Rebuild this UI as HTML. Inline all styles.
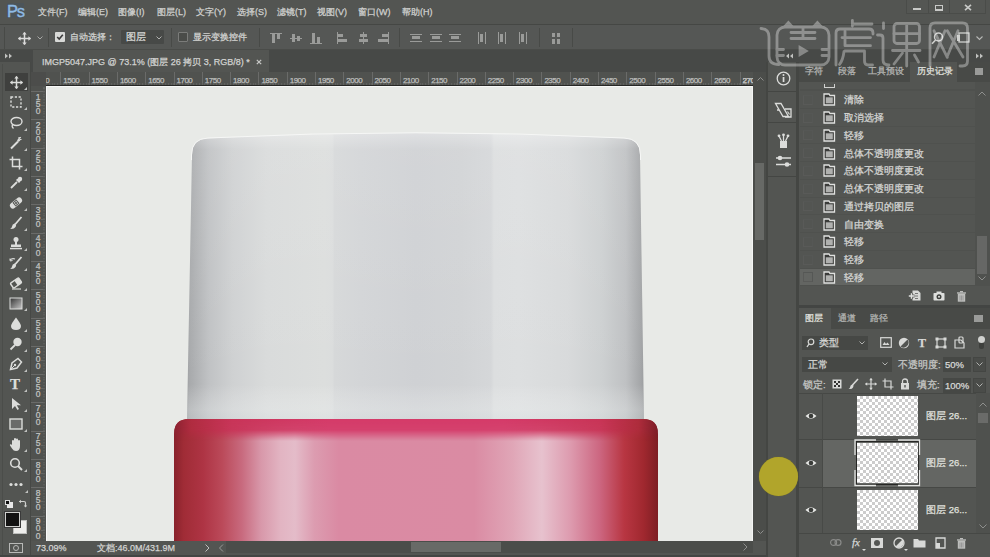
<!DOCTYPE html>
<html><head><meta charset="utf-8">
<style>
*{margin:0;padding:0;box-sizing:border-box}
html,body{width:990px;height:557px;overflow:hidden;background:#535552;font-family:"Liberation Sans",sans-serif;color:#d2d3d1}
.a{position:absolute}
.t{position:absolute;white-space:nowrap;line-height:1;-webkit-text-stroke:0.25px currentColor}
.m{font-size:9px;top:8px;color:#d0d1cf}
.rh{font-size:8px;color:#bdbebc;top:76.5px;letter-spacing:-0.5px}
.rv{font-size:8.5px;color:#c2c3c1;left:34.5px;width:7px;text-align:center;line-height:7.2px;white-space:normal}
svg{position:absolute;overflow:visible}
.hr{font-size:9.5px;color:#d6d7d5;left:844px}
</style></head><body>

<div class="a" style="left:0;top:0;width:990px;height:24px;background:#535552"></div>
<div class="a" style="left:0;top:24px;width:990px;height:1px;background:#454744"></div>
<div class="a" style="left:0;top:25px;width:990px;height:25px;background:#555755"></div>
<div class="a" style="left:0;top:49px;width:990px;height:1px;background:#4a4c49"></div>
<div class="a" style="left:0;top:50px;width:990px;height:22px;background:#474947"></div>
<div class="a" style="left:33px;top:50px;width:236px;height:22px;background:#535552"></div>
<div class="t" style="left:42px;top:58px;font-size:9px;color:#d2d3d1">IMGP5047.JPG @ 73.1% (图层 26 拷贝 3, RGB/8) *</div>
<svg style="left:256px;top:59px" width="6" height="6"><path d="M0.8 0.8L5.2 5.2M5.2 0.8L0.8 5.2" stroke="#c8c9c7" stroke-width="1.2"/></svg>
<div class="a" style="left:7px;top:3px;width:17px;height:15px;background:#4c5459"></div>
<div class="t" style="left:7px;top:3px;font-size:16.5px;color:#8ebae4;letter-spacing:-1.3px;-webkit-text-stroke:0.4px #8ebae4">Ps</div>
<div class="t m" style="left:38px">文件(F)</div>
<div class="t m" style="left:78px">编辑(E)</div>
<div class="t m" style="left:118px">图像(I)</div>
<div class="t m" style="left:157px">图层(L)</div>
<div class="t m" style="left:196px">文字(Y)</div>
<div class="t m" style="left:237px">选择(S)</div>
<div class="t m" style="left:277px">滤镜(T)</div>
<div class="t m" style="left:317px">视图(V)</div>
<div class="t m" style="left:358px">窗口(W)</div>
<div class="t m" style="left:402px">帮助(H)</div>
<div class="a" style="left:906px;top:0;width:80px;height:14px;border:1px solid #4a4c49;border-top:none;background:#545653"></div>
<div class="a" style="left:928px;top:0;width:1px;height:14px;background:#4a4c49"></div>
<div class="a" style="left:949px;top:0;width:1px;height:14px;background:#4a4c49"></div>
<div class="a" style="left:913px;top:8px;width:8px;height:2px;background:#c8c9c7"></div>
<div class="a" style="left:935px;top:5px;width:8px;height:6px;border:1.5px solid #c8c9c7;border-bottom-width:2px"></div>
<svg style="left:964px;top:4px" width="8" height="7"><path d="M1 0.8L7 6.2M7 0.8L1 6.2" stroke="#c8c9c7" stroke-width="1.6"/></svg>
<div class="a" style="left:4px;top:27px;width:1px;height:22px;background:#484a47"></div>
<svg style="left:18px;top:32px" width="13" height="13" viewBox="0 0 13 13"><path d="M6.5 0.5V12.5M0.5 6.5H12.5" stroke="#dcdcdc" stroke-width="1.5"/><path d="M6.5 0L4.3 2.6H8.7Z M6.5 13L4.3 10.4H8.7Z M0 6.5L2.6 4.3V8.7Z M13 6.5L10.4 4.3V8.7Z" fill="#dcdcdc"/></svg>
<svg style="left:37px;top:36px" width="6" height="4"><path d="M0.5 0.5L3 3L5.5 0.5" stroke="#a8a9a7" fill="none" stroke-width="1"/></svg>
<div class="a" style="left:48px;top:28px;width:1px;height:19px;background:#484a47"></div>
<div class="a" style="left:55px;top:32px;width:10px;height:10px;background:#d8d9d7;border-radius:1px"></div>
<svg style="left:56px;top:33px" width="8" height="8"><path d="M1.2 4L3.2 6L6.8 1.8" stroke="#3a3a3a" fill="none" stroke-width="1.6"/></svg>
<div class="t" style="left:70px;top:33px;font-size:9px;color:#d4d5d3">自动选择：</div>
<div class="a" style="left:121px;top:30px;width:43px;height:14px;background:#474947;border-radius:1px"></div>
<div class="t" style="left:126px;top:32px;font-size:9.5px;color:#d8d9d7">图层</div>
<svg style="left:156px;top:36px" width="6" height="4"><path d="M0.5 0.5L3 3L5.5 0.5" stroke="#b0b1af" fill="none" stroke-width="1"/></svg>
<div class="a" style="left:171px;top:28px;width:1px;height:19px;background:#484a47"></div>
<div class="a" style="left:178px;top:32px;width:10px;height:10px;border:1px solid #7b7c7a;background:#4a4c49;border-radius:1px"></div>
<div class="t" style="left:193px;top:33px;font-size:9px;color:#d4d5d3">显示变换控件</div>
<div class="a" style="left:259px;top:28px;width:1px;height:19px;background:#484a47"></div>
<div class="a" style="left:399px;top:28px;width:1px;height:19px;background:#484a47"></div>
<div class="a" style="left:539px;top:28px;width:1px;height:19px;background:#484a47"></div>
<div class="a" style="left:572px;top:28px;width:1px;height:19px;background:#484a47"></div>
<div class="a" style="left:270px;top:33px;width:12px;height:1px;background:#9a9b99"></div><div class="a" style="left:272px;top:33px;width:3px;height:10px;background:#9a9b99"></div><div class="a" style="left:277px;top:33px;width:3px;height:6px;background:#9a9b99"></div>
<div class="a" style="left:290px;top:38px;width:12px;height:1px;background:#9a9b99"></div><div class="a" style="left:292px;top:34px;width:3px;height:8px;background:#9a9b99"></div><div class="a" style="left:297px;top:36px;width:3px;height:5px;background:#9a9b99"></div>
<div class="a" style="left:310px;top:43px;width:12px;height:1px;background:#9a9b99"></div><div class="a" style="left:312px;top:33px;width:3px;height:10px;background:#9a9b99"></div><div class="a" style="left:317px;top:37px;width:3px;height:6px;background:#9a9b99"></div>
<div class="a" style="left:337px;top:32px;width:1px;height:12px;background:#9a9b99"></div><div class="a" style="left:337px;top:34px;width:6px;height:3px;background:#9a9b99"></div><div class="a" style="left:337px;top:39px;width:10px;height:3px;background:#9a9b99"></div>
<div class="a" style="left:363px;top:32px;width:1px;height:12px;background:#9a9b99"></div><div class="a" style="left:360px;top:34px;width:7px;height:3px;background:#9a9b99"></div><div class="a" style="left:359px;top:39px;width:9px;height:3px;background:#9a9b99"></div>
<div class="a" style="left:388px;top:32px;width:1px;height:12px;background:#9a9b99"></div><div class="a" style="left:382px;top:34px;width:6px;height:3px;background:#9a9b99"></div><div class="a" style="left:378px;top:39px;width:10px;height:3px;background:#9a9b99"></div>
<div class="a" style="left:410px;top:34px;width:12px;height:1px;background:#9a9b99"></div><div class="a" style="left:410px;top:41px;width:12px;height:1px;background:#9a9b99"></div><div class="a" style="left:412px;top:36px;width:8px;height:3px;background:#9a9b99"></div>
<div class="a" style="left:430px;top:34px;width:12px;height:1px;background:#9a9b99"></div><div class="a" style="left:430px;top:41px;width:12px;height:1px;background:#9a9b99"></div><div class="a" style="left:432px;top:36px;width:8px;height:3px;background:#9a9b99"></div>
<div class="a" style="left:449px;top:34px;width:12px;height:1px;background:#9a9b99"></div><div class="a" style="left:449px;top:41px;width:12px;height:1px;background:#9a9b99"></div><div class="a" style="left:451px;top:36px;width:8px;height:3px;background:#9a9b99"></div>
<div class="a" style="left:478px;top:32px;width:1px;height:12px;background:#9a9b99"></div><div class="a" style="left:485px;top:32px;width:1px;height:12px;background:#9a9b99"></div><div class="a" style="left:480px;top:34px;width:3px;height:8px;background:#9a9b99"></div>
<div class="a" style="left:498px;top:32px;width:1px;height:12px;background:#9a9b99"></div><div class="a" style="left:505px;top:32px;width:1px;height:12px;background:#9a9b99"></div><div class="a" style="left:500px;top:34px;width:3px;height:8px;background:#9a9b99"></div>
<div class="a" style="left:519px;top:32px;width:1px;height:12px;background:#9a9b99"></div><div class="a" style="left:526px;top:32px;width:1px;height:12px;background:#9a9b99"></div><div class="a" style="left:521px;top:34px;width:3px;height:8px;background:#9a9b99"></div>
<div class="a" style="left:552px;top:33px;width:3px;height:4px;background:#9a9b99"></div><div class="a" style="left:557px;top:33px;width:3px;height:4px;background:#9a9b99"></div><div class="a" style="left:552px;top:39px;width:3px;height:5px;background:#9a9b99"></div><div class="a" style="left:557px;top:39px;width:3px;height:5px;background:#9a9b99"></div>
<div class="a" style="left:0;top:50px;width:31px;height:12px;background:#474947"></div>
<svg style="left:5px;top:53px" width="8" height="6"><path d="M0 0.5L3 3L0 5.5Z M4 0.5L7 3L4 5.5Z" fill="#c0c1bf"/></svg>
<div class="a" style="left:0;top:62px;width:31px;height:495px;background:#535552"></div>
<div class="a" style="left:2px;top:64px;width:1px;height:493px;background:#4b4d4a"></div>
<div class="a" style="left:30px;top:62px;width:1px;height:495px;background:#464845"></div>
<div class="a" style="left:5px;top:73px;width:23px;height:18px;background:#3f403e"></div>
<svg style="left:10px;top:76px" width="13" height="13" viewBox="0 0 13 13"><path d="M6.5 0.5V12.5M0.5 6.5H12.5" stroke="#dcdddb" stroke-width="1.5"/><path d="M6.5 0L4.3 2.6H8.7Z M6.5 13L4.3 10.4H8.7Z M0 6.5L2.6 4.3V8.7Z M13 6.5L10.4 4.3V8.7Z" fill="#dcdddb"/></svg>
<div class="a" style="left:24px;top:87px;width:0;height:0;border-left:3px solid transparent;border-bottom:3px solid #c0c1bf"></div>
<svg style="left:10px;top:96px" width="12" height="12"><rect x="1" y="1" width="10" height="10" fill="none" stroke="#dcdddb" stroke-width="1.4" stroke-dasharray="2.2 1.6"/></svg>
<div class="a" style="left:24px;top:107px;width:0;height:0;border-left:3px solid transparent;border-bottom:3px solid #c0c1bf"></div>
<svg style="left:9px;top:116px" width="14" height="14"><ellipse cx="7.5" cy="5.5" rx="5.5" ry="4" fill="none" stroke="#dcdddb" stroke-width="1.4"/><path d="M3.5 8.5Q2.5 11 4.5 12.5" fill="none" stroke="#dcdddb" stroke-width="1.3"/></svg>
<div class="a" style="left:24px;top:128px;width:0;height:0;border-left:3px solid transparent;border-bottom:3px solid #c0c1bf"></div>
<svg style="left:9px;top:136px" width="14" height="14"><path d="M2 12.5L9 5.5" stroke="#dcdddb" stroke-width="2"/><path d="M10 1V3M12.5 3.5H10.5M11.8 1.2L10.6 2.4" stroke="#dcdddb" stroke-width="1.1"/><rect x="8.5" y="3" width="2.5" height="2.5" fill="#dcdddb" transform="rotate(45 9.7 4.2)"/></svg>
<div class="a" style="left:24px;top:148px;width:0;height:0;border-left:3px solid transparent;border-bottom:3px solid #c0c1bf"></div>
<svg style="left:9px;top:156px" width="14" height="14"><path d="M3.5 0.5V10.5H13.5M0.5 3.5H10.5V13.5" fill="none" stroke="#dcdddb" stroke-width="1.5"/></svg>
<div class="a" style="left:24px;top:168px;width:0;height:0;border-left:3px solid transparent;border-bottom:3px solid #c0c1bf"></div>
<svg style="left:9px;top:176px" width="14" height="14"><path d="M2 12L8 6" stroke="#dcdddb" stroke-width="1.8"/><path d="M7 4L10 7L11.5 5.5L8.5 2.5Z" fill="#dcdddb"/><circle cx="11" cy="3" r="2.2" fill="#dcdddb"/></svg>
<div class="a" style="left:24px;top:188px;width:0;height:0;border-left:3px solid transparent;border-bottom:3px solid #c0c1bf"></div>
<svg style="left:8px;top:196px" width="16" height="14"><g transform="rotate(-40 8 7)"><rect x="1" y="4" width="14" height="6" rx="3" fill="#dcdddb"/><rect x="5.5" y="4.5" width="5" height="5" fill="#535552"/><circle cx="7" cy="6" r="0.7" fill="#dcdddb"/><circle cx="9" cy="8" r="0.7" fill="#dcdddb"/><circle cx="9" cy="6" r="0.7" fill="#dcdddb"/><circle cx="7" cy="8" r="0.7" fill="#dcdddb"/></g></svg>
<div class="a" style="left:24px;top:208px;width:0;height:0;border-left:3px solid transparent;border-bottom:3px solid #c0c1bf"></div>
<svg style="left:9px;top:216px" width="14" height="14"><path d="M12.5 1L6 8.5" stroke="#dcdddb" stroke-width="1.8"/><path d="M5.8 7.5Q3.2 8 3 10.5Q2.5 12.5 1 13Q5 13.5 6.5 11Q7.5 9.5 6.8 8.5Z" fill="#dcdddb"/></svg>
<div class="a" style="left:24px;top:228px;width:0;height:0;border-left:3px solid transparent;border-bottom:3px solid #c0c1bf"></div>
<svg style="left:9px;top:236px" width="14" height="14"><circle cx="7" cy="3.5" r="2.5" fill="#dcdddb"/><rect x="6" y="5" width="2" height="4" fill="#dcdddb"/><rect x="2" y="8.5" width="10" height="2.5" fill="#dcdddb"/><rect x="1" y="11.8" width="12" height="1.5" fill="#dcdddb"/></svg>
<div class="a" style="left:24px;top:248px;width:0;height:0;border-left:3px solid transparent;border-bottom:3px solid #c0c1bf"></div>
<svg style="left:9px;top:256px" width="14" height="14"><path d="M12.5 1L6 8.5" stroke="#dcdddb" stroke-width="1.8"/><path d="M5.8 7.5Q3.2 8 3 10.5Q2.5 12.5 1 13Q5 13.5 6.5 11Q7.5 9.5 6.8 8.5Z" fill="#dcdddb"/><path d="M1 4Q3 2 6 3" fill="none" stroke="#dcdddb" stroke-width="1.2"/><path d="M1 2.5L1.2 5L3.5 4.5" fill="none" stroke="#dcdddb" stroke-width="1"/></svg>
<div class="a" style="left:24px;top:268px;width:0;height:0;border-left:3px solid transparent;border-bottom:3px solid #c0c1bf"></div>
<svg style="left:9px;top:276px" width="14" height="14"><g transform="rotate(-35 7 7)"><rect x="2" y="4" width="10" height="6" rx="1" fill="none" stroke="#dcdddb" stroke-width="1.4"/><rect x="7" y="4" width="5" height="6" fill="#dcdddb"/></g><path d="M3 13H12" stroke="#dcdddb" stroke-width="1.2"/></svg>
<div class="a" style="left:24px;top:288px;width:0;height:0;border-left:3px solid transparent;border-bottom:3px solid #c0c1bf"></div>
<svg style="left:9px;top:297px" width="14" height="13"><defs><linearGradient id="gt" x1="0" y1="0" x2="1" y2="1"><stop offset="0" stop-color="#333"/><stop offset="1" stop-color="#c8c8c8"/></linearGradient></defs><rect x="1" y="1" width="12" height="11" fill="url(#gt)" stroke="#dcdddb" stroke-width="1"/></svg>
<div class="a" style="left:24px;top:308px;width:0;height:0;border-left:3px solid transparent;border-bottom:3px solid #c0c1bf"></div>
<svg style="left:10px;top:317px" width="12" height="14"><path d="M6 0.5Q1 7 1 9Q1 13 6 13Q11 13 11 9Q11 7 6 0.5Z" fill="#dcdddb"/></svg>
<div class="a" style="left:24px;top:329px;width:0;height:0;border-left:3px solid transparent;border-bottom:3px solid #c0c1bf"></div>
<svg style="left:9px;top:337px" width="14" height="14"><circle cx="8.5" cy="5" r="4.2" fill="#dcdddb"/><path d="M6 8L1.5 12.5" stroke="#dcdddb" stroke-width="1.8"/></svg>
<div class="a" style="left:24px;top:349px;width:0;height:0;border-left:3px solid transparent;border-bottom:3px solid #c0c1bf"></div>
<svg style="left:9px;top:357px" width="14" height="14"><path d="M1.5 12.5L3 6L9 1.5L12.5 5L8 11Z" fill="none" stroke="#dcdddb" stroke-width="1.5"/><path d="M1.5 12.5L5.5 8.5" stroke="#dcdddb" stroke-width="1"/><circle cx="6" cy="8" r="1.2" fill="#dcdddb"/></svg>
<div class="a" style="left:24px;top:369px;width:0;height:0;border-left:3px solid transparent;border-bottom:3px solid #c0c1bf"></div>
<div class="t" style="left:10px;top:377px;font-family:'Liberation Serif',serif;font-size:15px;font-weight:bold;color:#dcdddb">T</div>
<div class="a" style="left:24px;top:389px;width:0;height:0;border-left:3px solid transparent;border-bottom:3px solid #c0c1bf"></div>
<svg style="left:11px;top:397px" width="11" height="14"><path d="M1 1V12L4 9L6.5 13L8 12L5.8 8.2H10Z" fill="#dcdddb"/></svg>
<div class="a" style="left:24px;top:409px;width:0;height:0;border-left:3px solid transparent;border-bottom:3px solid #c0c1bf"></div>
<svg style="left:9px;top:418px" width="14" height="12"><rect x="1" y="1" width="12" height="10" fill="#6a6b69" stroke="#dcdddb" stroke-width="1.4"/></svg>
<div class="a" style="left:24px;top:429px;width:0;height:0;border-left:3px solid transparent;border-bottom:3px solid #c0c1bf"></div>
<svg style="left:9px;top:437px" width="14" height="15"><path d="M3 8V4Q3 3 4 3Q5 3 5 4V7V2Q5 1 6 1Q7 1 7 2V7V2.5Q7 1.5 8 1.5Q9 1.5 9 2.5V7.5V4Q9 3 10 3Q11 3 11 4V9Q11 14 7 14Q4.5 14 3 11.5L1 8.5Q0.6 7.6 1.4 7.2Q2.2 6.9 2.8 7.8Z" fill="#dcdddb"/></svg>
<div class="a" style="left:24px;top:449px;width:0;height:0;border-left:3px solid transparent;border-bottom:3px solid #c0c1bf"></div>
<svg style="left:9px;top:457px" width="14" height="14"><circle cx="6" cy="6" r="4.3" fill="none" stroke="#dcdddb" stroke-width="1.6"/><path d="M9 9L13 13" stroke="#dcdddb" stroke-width="2"/></svg>
<div class="a" style="left:24px;top:469px;width:0;height:0;border-left:3px solid transparent;border-bottom:3px solid #c0c1bf"></div>
<svg style="left:9px;top:482px" width="14" height="5"><circle cx="2" cy="2.5" r="1.6" fill="#dcdddb"/><circle cx="7" cy="2.5" r="1.6" fill="#dcdddb"/><circle cx="12" cy="2.5" r="1.6" fill="#dcdddb"/></svg>
<div class="a" style="left:25px;top:490px;width:0;height:0;border-left:3px solid transparent;border-bottom:3px solid #c0c1bf"></div>
<div class="a" style="left:7px;top:502px;width:6px;height:6px;background:#e8e8e8"></div><div class="a" style="left:5px;top:500px;width:5px;height:5px;background:#111;border:1px solid #ddd"></div>
<svg style="left:18px;top:499px" width="9" height="9"><path d="M1 2.5H6Q7.5 2.5 7.5 4V8" fill="none" stroke="#d0d1cf" stroke-width="1.2"/><path d="M1 2.5L3 0.8V4.2Z M7.5 8.5L5.8 6.5H9.2Z" fill="#d0d1cf"/></svg>
<div class="a" style="left:13px;top:520px;width:14px;height:14px;background:#eeeeec;border:1px solid #bdbebc"></div>
<div class="a" style="left:5px;top:512px;width:15px;height:15px;background:#121212;border:1px solid #cfd0ce;outline:1px solid #3a3a3a"></div>
<div class="a" style="left:9px;top:543px;width:14px;height:10px;border:1px solid #b8b9b7"></div><div class="a" style="left:13px;top:545px;width:6px;height:6px;border:1px solid #b8b9b7;border-radius:50%"></div>
<div class="a" style="left:31px;top:72px;width:722px;height:14px;background:#50524f"></div>
<div class="a" style="left:31px;top:86px;width:15px;height:455px;background:#50524f"></div>
<div class="a" style="left:46px;top:85px;width:707px;height:1px;background:#262725"></div>
<div class="a" style="left:31px;top:72px;width:15px;height:14px;background:#4c4d4b"></div>
<div class="a" style="left:60.3px;top:72px;width:1px;height:13px;background:#6a6b69"></div>
<div class="a" style="left:74.5px;top:81px;width:1px;height:4px;background:#646663"></div>
<div class="a" style="left:88.6px;top:72px;width:1px;height:13px;background:#6a6b69"></div>
<div class="a" style="left:102.8px;top:81px;width:1px;height:4px;background:#646663"></div>
<div class="a" style="left:116.9px;top:72px;width:1px;height:13px;background:#6a6b69"></div>
<div class="a" style="left:131.1px;top:81px;width:1px;height:4px;background:#646663"></div>
<div class="a" style="left:145.2px;top:72px;width:1px;height:13px;background:#6a6b69"></div>
<div class="a" style="left:159.3px;top:81px;width:1px;height:4px;background:#646663"></div>
<div class="a" style="left:173.5px;top:72px;width:1px;height:13px;background:#6a6b69"></div>
<div class="a" style="left:187.7px;top:81px;width:1px;height:4px;background:#646663"></div>
<div class="a" style="left:201.8px;top:72px;width:1px;height:13px;background:#6a6b69"></div>
<div class="a" style="left:216.0px;top:81px;width:1px;height:4px;background:#646663"></div>
<div class="a" style="left:230.1px;top:72px;width:1px;height:13px;background:#6a6b69"></div>
<div class="a" style="left:244.3px;top:81px;width:1px;height:4px;background:#646663"></div>
<div class="a" style="left:258.4px;top:72px;width:1px;height:13px;background:#6a6b69"></div>
<div class="a" style="left:272.5px;top:81px;width:1px;height:4px;background:#646663"></div>
<div class="a" style="left:286.7px;top:72px;width:1px;height:13px;background:#6a6b69"></div>
<div class="a" style="left:300.8px;top:81px;width:1px;height:4px;background:#646663"></div>
<div class="a" style="left:315.0px;top:72px;width:1px;height:13px;background:#6a6b69"></div>
<div class="a" style="left:329.1px;top:81px;width:1px;height:4px;background:#646663"></div>
<div class="a" style="left:343.3px;top:72px;width:1px;height:13px;background:#6a6b69"></div>
<div class="a" style="left:357.4px;top:81px;width:1px;height:4px;background:#646663"></div>
<div class="a" style="left:371.6px;top:72px;width:1px;height:13px;background:#6a6b69"></div>
<div class="a" style="left:385.8px;top:81px;width:1px;height:4px;background:#646663"></div>
<div class="a" style="left:399.9px;top:72px;width:1px;height:13px;background:#6a6b69"></div>
<div class="a" style="left:414.1px;top:81px;width:1px;height:4px;background:#646663"></div>
<div class="a" style="left:428.2px;top:72px;width:1px;height:13px;background:#6a6b69"></div>
<div class="a" style="left:442.4px;top:81px;width:1px;height:4px;background:#646663"></div>
<div class="a" style="left:456.5px;top:72px;width:1px;height:13px;background:#6a6b69"></div>
<div class="a" style="left:470.6px;top:81px;width:1px;height:4px;background:#646663"></div>
<div class="a" style="left:484.8px;top:72px;width:1px;height:13px;background:#6a6b69"></div>
<div class="a" style="left:498.9px;top:81px;width:1px;height:4px;background:#646663"></div>
<div class="a" style="left:513.1px;top:72px;width:1px;height:13px;background:#6a6b69"></div>
<div class="a" style="left:527.2px;top:81px;width:1px;height:4px;background:#646663"></div>
<div class="a" style="left:541.4px;top:72px;width:1px;height:13px;background:#6a6b69"></div>
<div class="a" style="left:555.5px;top:81px;width:1px;height:4px;background:#646663"></div>
<div class="a" style="left:569.7px;top:72px;width:1px;height:13px;background:#6a6b69"></div>
<div class="a" style="left:583.9px;top:81px;width:1px;height:4px;background:#646663"></div>
<div class="a" style="left:598.0px;top:72px;width:1px;height:13px;background:#6a6b69"></div>
<div class="a" style="left:612.1px;top:81px;width:1px;height:4px;background:#646663"></div>
<div class="a" style="left:626.3px;top:72px;width:1px;height:13px;background:#6a6b69"></div>
<div class="a" style="left:640.4px;top:81px;width:1px;height:4px;background:#646663"></div>
<div class="a" style="left:654.6px;top:72px;width:1px;height:13px;background:#6a6b69"></div>
<div class="a" style="left:668.8px;top:81px;width:1px;height:4px;background:#646663"></div>
<div class="a" style="left:682.9px;top:72px;width:1px;height:13px;background:#6a6b69"></div>
<div class="a" style="left:697.0px;top:81px;width:1px;height:4px;background:#646663"></div>
<div class="a" style="left:711.2px;top:72px;width:1px;height:13px;background:#6a6b69"></div>
<div class="a" style="left:725.3px;top:81px;width:1px;height:4px;background:#646663"></div>
<div class="a" style="left:739.5px;top:72px;width:1px;height:13px;background:#6a6b69"></div>
<div class="a" style="left:46px;top:83px;width:707px;height:2px;background:repeating-linear-gradient(90deg,#616260 0 1px,transparent 1px 2.83px);background-position:0.15px 0"></div>
<div class="a" style="left:46px;top:72px;width:6px;height:13px;overflow:hidden"><div class="t rh" style="left:-12.5px;top:4.5px">1450</div></div>
<div class="t rh" style="left:63.3px">1500</div>
<div class="t rh" style="left:91.6px">1550</div>
<div class="t rh" style="left:119.9px">1600</div>
<div class="t rh" style="left:148.2px">1650</div>
<div class="t rh" style="left:176.5px">1700</div>
<div class="t rh" style="left:204.8px">1750</div>
<div class="t rh" style="left:233.1px">1800</div>
<div class="t rh" style="left:261.4px">1850</div>
<div class="t rh" style="left:289.7px">1900</div>
<div class="t rh" style="left:318.0px">1950</div>
<div class="t rh" style="left:346.3px">2000</div>
<div class="t rh" style="left:374.6px">2050</div>
<div class="t rh" style="left:402.9px">2100</div>
<div class="t rh" style="left:431.2px">2150</div>
<div class="t rh" style="left:459.5px">2200</div>
<div class="t rh" style="left:487.8px">2250</div>
<div class="t rh" style="left:516.1px">2300</div>
<div class="t rh" style="left:544.4px">2350</div>
<div class="t rh" style="left:572.7px">2400</div>
<div class="t rh" style="left:601.0px">2450</div>
<div class="t rh" style="left:629.3px">2500</div>
<div class="t rh" style="left:657.6px">2550</div>
<div class="t rh" style="left:685.9px">2600</div>
<div class="t rh" style="left:714.2px">2650</div>
<div class="t rh" style="left:742.5px">2700</div>
<div class="t rh" style="left:742.5px;width:10.5px;overflow:hidden">2700</div>
<div class="a" style="left:31px;top:91.1px;width:14px;height:1px;background:#6a6b69"></div>
<div class="a" style="left:41px;top:105.2px;width:4px;height:1px;background:#646663"></div>
<div class="t rv" style="top:93.6px">1<br>5<br>0</div>
<div class="a" style="left:31px;top:119.4px;width:14px;height:1px;background:#6a6b69"></div>
<div class="a" style="left:41px;top:133.5px;width:4px;height:1px;background:#646663"></div>
<div class="t rv" style="top:121.9px">2<br>0<br>0</div>
<div class="a" style="left:31px;top:147.7px;width:14px;height:1px;background:#6a6b69"></div>
<div class="a" style="left:41px;top:161.8px;width:4px;height:1px;background:#646663"></div>
<div class="t rv" style="top:150.2px">2<br>5<br>0</div>
<div class="a" style="left:31px;top:176.0px;width:14px;height:1px;background:#6a6b69"></div>
<div class="a" style="left:41px;top:190.2px;width:4px;height:1px;background:#646663"></div>
<div class="t rv" style="top:178.5px">3<br>0<br>0</div>
<div class="a" style="left:31px;top:204.3px;width:14px;height:1px;background:#6a6b69"></div>
<div class="a" style="left:41px;top:218.5px;width:4px;height:1px;background:#646663"></div>
<div class="t rv" style="top:206.8px">3<br>5<br>0</div>
<div class="a" style="left:31px;top:232.6px;width:14px;height:1px;background:#6a6b69"></div>
<div class="a" style="left:41px;top:246.8px;width:4px;height:1px;background:#646663"></div>
<div class="t rv" style="top:235.1px">4<br>0<br>0</div>
<div class="a" style="left:31px;top:260.9px;width:14px;height:1px;background:#6a6b69"></div>
<div class="a" style="left:41px;top:275.0px;width:4px;height:1px;background:#646663"></div>
<div class="t rv" style="top:263.4px">4<br>5<br>0</div>
<div class="a" style="left:31px;top:289.2px;width:14px;height:1px;background:#6a6b69"></div>
<div class="a" style="left:41px;top:303.3px;width:4px;height:1px;background:#646663"></div>
<div class="t rv" style="top:291.7px">5<br>0<br>0</div>
<div class="a" style="left:31px;top:317.5px;width:14px;height:1px;background:#6a6b69"></div>
<div class="a" style="left:41px;top:331.6px;width:4px;height:1px;background:#646663"></div>
<div class="t rv" style="top:320.0px">5<br>5<br>0</div>
<div class="a" style="left:31px;top:345.8px;width:14px;height:1px;background:#6a6b69"></div>
<div class="a" style="left:41px;top:359.9px;width:4px;height:1px;background:#646663"></div>
<div class="t rv" style="top:348.3px">6<br>0<br>0</div>
<div class="a" style="left:31px;top:374.1px;width:14px;height:1px;background:#6a6b69"></div>
<div class="a" style="left:41px;top:388.2px;width:4px;height:1px;background:#646663"></div>
<div class="t rv" style="top:376.6px">6<br>5<br>0</div>
<div class="a" style="left:31px;top:402.4px;width:14px;height:1px;background:#6a6b69"></div>
<div class="a" style="left:41px;top:416.5px;width:4px;height:1px;background:#646663"></div>
<div class="t rv" style="top:404.9px">7<br>0<br>0</div>
<div class="a" style="left:31px;top:430.7px;width:14px;height:1px;background:#6a6b69"></div>
<div class="a" style="left:41px;top:444.9px;width:4px;height:1px;background:#646663"></div>
<div class="t rv" style="top:433.2px">7<br>5<br>0</div>
<div class="a" style="left:31px;top:459.0px;width:14px;height:1px;background:#6a6b69"></div>
<div class="a" style="left:41px;top:473.1px;width:4px;height:1px;background:#646663"></div>
<div class="t rv" style="top:461.5px">8<br>0<br>0</div>
<div class="a" style="left:31px;top:487.3px;width:14px;height:1px;background:#6a6b69"></div>
<div class="a" style="left:41px;top:501.4px;width:4px;height:1px;background:#646663"></div>
<div class="t rv" style="top:489.8px">8<br>5<br>0</div>
<div class="a" style="left:31px;top:515.6px;width:14px;height:1px;background:#6a6b69"></div>
<div class="a" style="left:41px;top:529.8px;width:4px;height:1px;background:#646663"></div>
<div class="t rv" style="top:518.1px">9<br>0<br>0</div>
<div class="a" style="left:43px;top:87px;width:2px;height:454px;background:repeating-linear-gradient(180deg,#616260 0 1px,transparent 1px 2.83px);background-position:0 1.27px"></div>
<div class="a" style="left:46px;top:86px;width:707px;height:455px;background:#e8eae7;overflow:hidden">
<svg style="left:0;top:0" width="707" height="455" viewBox="46 86 707 455">
<defs>
<linearGradient id="cap" x1="187" y1="0" x2="644" y2="0" gradientUnits="userSpaceOnUse">
<stop offset="0" stop-color="#9fa1a3"/>
<stop offset="0.006" stop-color="#a8aaac"/>
<stop offset="0.048" stop-color="#c0c2c4"/>
<stop offset="0.1" stop-color="#cfd1d2"/>
<stop offset="0.175" stop-color="#d9dbdb"/>
<stop offset="0.3" stop-color="#dcdedd"/>
<stop offset="0.318" stop-color="#dbdddd"/>
<stop offset="0.323" stop-color="#d6d8d9"/>
<stop offset="0.38" stop-color="#d3d5d7"/>
<stop offset="0.5" stop-color="#cfd1d4"/>
<stop offset="0.6" stop-color="#d1d3d5"/>
<stop offset="0.665" stop-color="#d5d7d9"/>
<stop offset="0.672" stop-color="#dcdedf"/>
<stop offset="0.726" stop-color="#dddfe0"/>
<stop offset="0.834" stop-color="#d8dadb"/>
<stop offset="0.908" stop-color="#cdd0d1"/>
<stop offset="0.96" stop-color="#bfc1c3"/>
<stop offset="0.993" stop-color="#a4a6a8"/>
<stop offset="1" stop-color="#9c9ea0"/>
</linearGradient>
<linearGradient id="capv" x1="0" y1="132" x2="0" y2="419" gradientUnits="userSpaceOnUse">
<stop offset="0" stop-color="#ffffff" stop-opacity="0.35"/>
<stop offset="0.06" stop-color="#ffffff" stop-opacity="0.08"/>
<stop offset="0.88" stop-color="#ffffff" stop-opacity="0"/>
<stop offset="0.97" stop-color="#eef2f2" stop-opacity="0.3"/>
<stop offset="1" stop-color="#e0e8e8" stop-opacity="0.3"/>
</linearGradient>
<linearGradient id="red" x1="174" y1="0" x2="658" y2="0" gradientUnits="userSpaceOnUse">
<stop offset="0" stop-color="#88222c"/>
<stop offset="0.02" stop-color="#a02c36"/>
<stop offset="0.06" stop-color="#ae3444"/>
<stop offset="0.1" stop-color="#bb4a5a"/>
<stop offset="0.14" stop-color="#c86a7e"/>
<stop offset="0.18" stop-color="#d898aa"/>
<stop offset="0.22" stop-color="#e2b4c2"/>
<stop offset="0.25" stop-color="#e4bcc9"/>
<stop offset="0.29" stop-color="#dc9cb0"/>
<stop offset="0.34" stop-color="#da8aa3"/>
<stop offset="0.62" stop-color="#da8ba3"/>
<stop offset="0.7" stop-color="#e0a6b7"/>
<stop offset="0.76" stop-color="#e7c2ce"/>
<stop offset="0.82" stop-color="#dd9aae"/>
<stop offset="0.88" stop-color="#cc6680"/>
<stop offset="0.93" stop-color="#b83642"/>
<stop offset="0.97" stop-color="#a0282f"/>
<stop offset="1" stop-color="#7e1e24"/>
</linearGradient>
<linearGradient id="rim" x1="174" y1="0" x2="658" y2="0" gradientUnits="userSpaceOnUse">
<stop offset="0" stop-color="#8a2230"/>
<stop offset="0.035" stop-color="#b02c40"/>
<stop offset="0.12" stop-color="#c83458"/>
<stop offset="0.32" stop-color="#d43a68"/>
<stop offset="0.68" stop-color="#d43a68"/>
<stop offset="0.88" stop-color="#c83456"/>
<stop offset="0.96" stop-color="#ae2c3c"/>
<stop offset="1" stop-color="#7c1e28"/>
</linearGradient>
<linearGradient id="rimv" x1="0" y1="419" x2="0" y2="441" gradientUnits="userSpaceOnUse">
<stop offset="0" stop-color="#fff" stop-opacity="1"/>
<stop offset="0.5" stop-color="#fff" stop-opacity="0.92"/>
<stop offset="0.85" stop-color="#fff" stop-opacity="0.25"/>
<stop offset="1" stop-color="#fff" stop-opacity="0"/>
</linearGradient>
<mask id="rimm" maskUnits="userSpaceOnUse" x="0" y="0" width="990" height="557"><rect x="0" y="0" width="990" height="557" fill="url(#rimv)"/></mask>
</defs>
<path d="M174 545V434Q174 419 189 419H643Q658 419 658 434V545Z" fill="url(#red)"/>
<path d="M174 545V434Q174 419 189 419H643Q658 419 658 434V545Z" fill="url(#rim)" mask="url(#rimm)"/>
<path d="M187 419L192 155Q192 139 208 138.5Q416 128 624 138.5Q640 139 640 155L644 419Z" fill="url(#cap)"/>
<path d="M187 419L192 155Q192 139 208 138.5Q416 128 624 138.5Q640 139 640 155L644 419Z" fill="url(#capv)"/>
<path d="M191.5 160V155Q191.5 138.5 208 138Q416 127.5 624 138Q640.5 138.5 640.5 155V160" fill="none" stroke="#f6f7f6" stroke-width="1"/>
</svg>
<div class="a" style="left:0;top:0;width:707px;height:1px;background:#f8f9f8"></div>
<div class="a" style="left:0;top:0;width:1px;height:455px;background:#f8f9f8"></div>
<div class="a" style="left:706px;top:0;width:1px;height:455px;background:#f4f5f4"></div>
</div>
<div class="a" style="left:753px;top:72px;width:14px;height:469px;background:#4b4d4a"></div>
<svg style="left:757px;top:77px" width="7" height="4"><path d="M0.5 3.5L3.5 0.5L6.5 3.5" stroke="#8e8f8d" fill="none"/></svg>
<div class="a" style="left:755px;top:163px;width:9px;height:77px;background:#676966"></div>
<svg style="left:757px;top:530px" width="7" height="4"><path d="M0.5 0.5L3.5 3.5L6.5 0.5" stroke="#8e8f8d" fill="none"/></svg>
<div class="a" style="left:31px;top:541px;width:736px;height:16px;background:#535552"></div>
<div class="a" style="left:0;top:555px;width:990px;height:2px;background:#434543"></div>
<div class="t" style="left:36px;top:544px;font-size:9px;color:#d2d3d1">73.09%</div>
<div class="t" style="left:97px;top:544px;font-size:9px;color:#d2d3d1">文档:46.0M/431.9M</div>
<svg style="left:205px;top:544px" width="5" height="8"><path d="M0.5 0.5L4 4L0.5 7.5" stroke="#c0c1bf" fill="none"/></svg>
<svg style="left:219px;top:544px" width="5" height="8"><path d="M4 0.5L0.5 4L4 7.5" stroke="#9a9b99" fill="none"/></svg>
<div class="a" style="left:226px;top:541px;width:527px;height:12px;background:#4b4d4a"></div>
<div class="a" style="left:411px;top:542px;width:90px;height:10px;background:#686a67"></div>
<svg style="left:743px;top:543px" width="5" height="8"><path d="M0.5 0.5L4 4L0.5 7.5" stroke="#8e8f8d" fill="none"/></svg>
<svg style="left:931px;top:32px" width="13" height="13"><circle cx="7.5" cy="5" r="4" fill="none" stroke="#d0d1cf" stroke-width="1.4"/><path d="M4.6 8L1 11.8" stroke="#d0d1cf" stroke-width="1.6"/></svg>
<svg style="left:956px;top:32px" width="14" height="12"><rect x="3" y="1" width="10" height="9" fill="none" stroke="#d0d1cf" stroke-width="1.3"/><rect x="1" y="3" width="3" height="6" fill="#d0d1cf"/></svg>
<svg style="left:976px;top:36px" width="7" height="5"><path d="M0.5 0.5L3.5 3.5L6.5 0.5" stroke="#b8b9b7" fill="none" stroke-width="1.1"/></svg>
<div class="a" style="left:767px;top:50px;width:223px;height:12px;background:#474947"></div>
<svg style="left:786px;top:53px" width="8" height="6"><path d="M3 0.5L0 3L3 5.5Z M7 0.5L4 3L7 5.5Z" fill="#c0c1bf"/></svg>
<svg style="left:976px;top:53px" width="8" height="6"><path d="M0 0.5L3 3L0 5.5Z M4 0.5L7 3L4 5.5Z" fill="#c0c1bf"/></svg>
<div class="a" style="left:767px;top:62px;width:30px;height:495px;background:#535552"></div>
<div class="a" style="left:766px;top:62px;width:2px;height:495px;background:#444643"></div>
<div class="a" style="left:796px;top:62px;width:3px;height:495px;background:#444643"></div>
<div class="a" style="left:768px;top:91px;width:28px;height:1px;background:#444643"></div>
<div class="a" style="left:768px;top:122px;width:28px;height:1px;background:#444643"></div>
<div class="a" style="left:768px;top:176px;width:28px;height:1px;background:#444643"></div>
<svg style="left:776px;top:71px" width="15" height="15"><circle cx="7.5" cy="7.5" r="6.3" fill="none" stroke="#dcdddb" stroke-width="1.3"/><rect x="6.7" y="6" width="1.7" height="5" fill="#dcdddb"/><circle cx="7.5" cy="4" r="1" fill="#dcdddb"/></svg>
<svg style="left:774px;top:101px" width="20" height="18"><path d="M1.5 2.5H7L14.5 15.5H9Z" fill="none" stroke="#dcdddb" stroke-width="1.3"/><path d="M11 8H17V16H11" fill="none" stroke="#dcdddb" stroke-width="1.3"/><path d="M13.5 10.5L15.5 13.5" stroke="#dcdddb" stroke-width="1.1"/><circle cx="4" cy="9" r="1" fill="#dcdddb"/></svg>
<svg style="left:777px;top:133px" width="13" height="16"><rect x="3" y="8" width="7" height="7" fill="#dcdddb"/><path d="M4.5 8L2 3M6.5 8V2M8.5 8L11 3" stroke="#dcdddb" stroke-width="1.3"/><circle cx="2" cy="2.8" r="1.4" fill="#dcdddb"/><circle cx="6.5" cy="1.8" r="1.4" fill="#dcdddb"/><circle cx="11" cy="2.8" r="1.4" fill="#dcdddb"/></svg>
<svg style="left:775px;top:155px" width="17" height="13"><path d="M1 3H16M1 9.5H16" stroke="#dcdddb" stroke-width="1.3"/><circle cx="5" cy="3" r="2.3" fill="#dcdddb"/><circle cx="12" cy="9.5" r="2.3" fill="#dcdddb"/></svg>
<div class="a" style="left:799px;top:62px;width:191px;height:495px;background:#535552"></div>
<div class="a" style="left:799px;top:62px;width:191px;height:20px;background:#484a47"></div>
<div class="a" style="left:910px;top:62px;width:47px;height:20px;background:#535552"></div>
<div class="t" style="left:805px;top:67px;font-size:9px;color:#b4b5b3">字符</div>
<div class="t" style="left:838px;top:67px;font-size:9px;color:#b4b5b3">段落</div>
<div class="t" style="left:868px;top:67px;font-size:9px;color:#b4b5b3">工具预设</div>
<div class="t" style="left:917px;top:67px;font-size:9px;color:#e0e1df">历史记录</div>
<div class="a" style="left:975px;top:68px;width:8px;height:7px;background:#9a9b99"></div>
<div class="a" style="left:800px;top:82px;width:175px;height:204px;background:#4f514e"></div>
<div class="a" style="left:800px;top:82.00px;width:175px;height:7.00px;background:#535552"></div>
<div class="a" style="left:824px;top:84px;width:11px;height:4px;border:1.3px solid #d0d1cf;border-top:none"></div>
<div class="a" style="left:800px;top:91.00px;width:175px;height:16.75px;background:#535552"></div>
<div class="a" style="left:803px;top:94.9px;width:10px;height:10px;border:1px solid #595a58;border-top-color:#555755;border-right-color:#555755"></div>
<svg style="left:823px;top:93.4px" width="13" height="13"><path d="M1 1H6L7 2.5H11.5V12H1Z" fill="#3a3b39" stroke="#e0e1df" stroke-width="1.3"/><rect x="2.8" y="4.3" width="7" height="6" fill="#b0b1af"/></svg>
<div class="t hr" style="top:95.4px">清除</div>
<div class="a" style="left:800px;top:108.75px;width:175px;height:16.75px;background:#535552"></div>
<div class="a" style="left:803px;top:112.6px;width:10px;height:10px;border:1px solid #595a58;border-top-color:#555755;border-right-color:#555755"></div>
<svg style="left:823px;top:111.1px" width="13" height="13"><path d="M1 1H6L7 2.5H11.5V12H1Z" fill="#3a3b39" stroke="#e0e1df" stroke-width="1.3"/><rect x="2.8" y="4.3" width="7" height="6" fill="#b0b1af"/></svg>
<div class="t hr" style="top:113.1px">取消选择</div>
<div class="a" style="left:800px;top:126.50px;width:175px;height:16.75px;background:#535552"></div>
<div class="a" style="left:803px;top:130.4px;width:10px;height:10px;border:1px solid #595a58;border-top-color:#555755;border-right-color:#555755"></div>
<svg style="left:823px;top:128.9px" width="13" height="13"><path d="M1 1H6L7 2.5H11.5V12H1Z" fill="#3a3b39" stroke="#e0e1df" stroke-width="1.3"/><rect x="2.8" y="4.3" width="7" height="6" fill="#b0b1af"/></svg>
<div class="t hr" style="top:130.9px">轻移</div>
<div class="a" style="left:800px;top:144.25px;width:175px;height:16.75px;background:#535552"></div>
<div class="a" style="left:803px;top:148.1px;width:10px;height:10px;border:1px solid #595a58;border-top-color:#555755;border-right-color:#555755"></div>
<svg style="left:823px;top:146.6px" width="13" height="13"><path d="M1 1H6L7 2.5H11.5V12H1Z" fill="#3a3b39" stroke="#e0e1df" stroke-width="1.3"/><rect x="2.8" y="4.3" width="7" height="6" fill="#b0b1af"/></svg>
<div class="t hr" style="top:148.6px">总体不透明度更改</div>
<div class="a" style="left:800px;top:162.00px;width:175px;height:16.75px;background:#535552"></div>
<div class="a" style="left:803px;top:165.9px;width:10px;height:10px;border:1px solid #595a58;border-top-color:#555755;border-right-color:#555755"></div>
<svg style="left:823px;top:164.4px" width="13" height="13"><path d="M1 1H6L7 2.5H11.5V12H1Z" fill="#3a3b39" stroke="#e0e1df" stroke-width="1.3"/><rect x="2.8" y="4.3" width="7" height="6" fill="#b0b1af"/></svg>
<div class="t hr" style="top:166.4px">总体不透明度更改</div>
<div class="a" style="left:800px;top:179.75px;width:175px;height:16.75px;background:#535552"></div>
<div class="a" style="left:803px;top:183.6px;width:10px;height:10px;border:1px solid #595a58;border-top-color:#555755;border-right-color:#555755"></div>
<svg style="left:823px;top:182.1px" width="13" height="13"><path d="M1 1H6L7 2.5H11.5V12H1Z" fill="#3a3b39" stroke="#e0e1df" stroke-width="1.3"/><rect x="2.8" y="4.3" width="7" height="6" fill="#b0b1af"/></svg>
<div class="t hr" style="top:184.1px">总体不透明度更改</div>
<div class="a" style="left:800px;top:197.50px;width:175px;height:16.75px;background:#535552"></div>
<div class="a" style="left:803px;top:201.4px;width:10px;height:10px;border:1px solid #595a58;border-top-color:#555755;border-right-color:#555755"></div>
<svg style="left:823px;top:199.9px" width="13" height="13"><path d="M1 1H6L7 2.5H11.5V12H1Z" fill="#3a3b39" stroke="#e0e1df" stroke-width="1.3"/><rect x="2.8" y="4.3" width="7" height="6" fill="#b0b1af"/></svg>
<div class="t hr" style="top:201.9px">通过拷贝的图层</div>
<div class="a" style="left:800px;top:215.25px;width:175px;height:16.75px;background:#535552"></div>
<div class="a" style="left:803px;top:219.1px;width:10px;height:10px;border:1px solid #595a58;border-top-color:#555755;border-right-color:#555755"></div>
<svg style="left:823px;top:217.6px" width="13" height="13"><path d="M1 1H6L7 2.5H11.5V12H1Z" fill="#3a3b39" stroke="#e0e1df" stroke-width="1.3"/><rect x="2.8" y="4.3" width="7" height="6" fill="#b0b1af"/></svg>
<div class="t hr" style="top:219.6px">自由变换</div>
<div class="a" style="left:800px;top:233.00px;width:175px;height:16.75px;background:#535552"></div>
<div class="a" style="left:803px;top:236.9px;width:10px;height:10px;border:1px solid #595a58;border-top-color:#555755;border-right-color:#555755"></div>
<svg style="left:823px;top:235.4px" width="13" height="13"><path d="M1 1H6L7 2.5H11.5V12H1Z" fill="#3a3b39" stroke="#e0e1df" stroke-width="1.3"/><rect x="2.8" y="4.3" width="7" height="6" fill="#b0b1af"/></svg>
<div class="t hr" style="top:237.4px">轻移</div>
<div class="a" style="left:800px;top:250.75px;width:175px;height:16.75px;background:#535552"></div>
<div class="a" style="left:803px;top:254.6px;width:10px;height:10px;border:1px solid #595a58;border-top-color:#555755;border-right-color:#555755"></div>
<svg style="left:823px;top:253.1px" width="13" height="13"><path d="M1 1H6L7 2.5H11.5V12H1Z" fill="#3a3b39" stroke="#e0e1df" stroke-width="1.3"/><rect x="2.8" y="4.3" width="7" height="6" fill="#b0b1af"/></svg>
<div class="t hr" style="top:255.1px">轻移</div>
<div class="a" style="left:800px;top:268.50px;width:175px;height:16.75px;background:#636562"></div>
<div class="a" style="left:803px;top:272.4px;width:10px;height:10px;border:1px solid #595a58;border-top-color:#555755;border-right-color:#555755"></div>
<svg style="left:823px;top:270.9px" width="13" height="13"><path d="M1 1H6L7 2.5H11.5V12H1Z" fill="#3a3b39" stroke="#e0e1df" stroke-width="1.3"/><rect x="2.8" y="4.3" width="7" height="6" fill="#b0b1af"/></svg>
<div class="t hr" style="top:272.9px">轻移</div>
<div class="a" style="left:975px;top:82px;width:15px;height:204px;background:#4f514e"></div>
<svg style="left:978px;top:91px" width="8" height="5"><path d="M0.5 4.5L4 1L7.5 4.5" stroke="#8e8f8d" fill="none"/></svg>
<div class="a" style="left:977px;top:236px;width:10px;height:38px;background:#666765"></div>
<svg style="left:978px;top:276px" width="8" height="5"><path d="M0.5 0.5L4 4L7.5 0.5" stroke="#8e8f8d" fill="none"/></svg>
<svg style="left:908px;top:290px" width="13" height="11"><path d="M4.5 0.5H10L12.5 3V10.5H4.5Z" fill="#d8d9d7"/><path d="M7 3.5H10M7 6H10M7 8.5H10" stroke="#6a6b69" stroke-width="0.9"/><path d="M0.5 6H6.5M3.5 3V9" stroke="#535552" stroke-width="3"/><path d="M0.8 6H6.2M3.5 3.3V8.7" stroke="#e0e1df" stroke-width="1.5"/></svg>
<svg style="left:933px;top:291px" width="12" height="10"><rect x="0.5" y="2" width="11" height="7.5" rx="0.8" fill="#dedfdd"/><rect x="3.5" y="0.5" width="5" height="2" fill="#dedfdd"/><circle cx="6" cy="5.8" r="2.5" fill="#3e403d"/><circle cx="6" cy="5.8" r="1" fill="#dedfdd"/></svg>
<svg style="left:957px;top:291px" width="9" height="11"><rect x="0.8" y="2.5" width="7.4" height="8.2" fill="#bdbebc"/><rect x="0" y="1.3" width="9" height="1.3" fill="#bdbebc"/><rect x="3" y="0" width="3" height="1.3" fill="#bdbebc"/><path d="M3 4.5V9.5M4.5 4.5V9.5M6 4.5V9.5" stroke="#8a8b89" stroke-width="0.7"/></svg>
<div class="a" style="left:799px;top:305px;width:191px;height:3px;background:#434543"></div>
<div class="a" style="left:799px;top:308px;width:191px;height:21px;background:#484a47"></div>
<div class="a" style="left:799px;top:308px;width:32px;height:21px;background:#535552"></div>
<div class="t" style="left:805px;top:314px;font-size:9px;color:#e0e1df">图层</div>
<div class="t" style="left:838px;top:314px;font-size:9px;color:#b4b5b3">通道</div>
<div class="t" style="left:870px;top:314px;font-size:9px;color:#b4b5b3">路径</div>
<div class="a" style="left:974px;top:315px;width:9px;height:7px;background:#9a9b99"></div>
<div class="a" style="left:802px;top:336px;width:66px;height:14px;background:#464845"></div>
<svg style="left:806px;top:338px" width="9" height="10"><circle cx="5" cy="3.8" r="2.8" fill="none" stroke="#d8d9d7" stroke-width="1.2"/><path d="M3 6L1 9" stroke="#d8d9d7" stroke-width="1.3"/></svg>
<div class="t" style="left:819px;top:338px;font-size:9.5px;color:#d8d9d7">类型</div>
<svg style="left:859px;top:341px" width="6" height="4"><path d="M0.5 0.5L3 3L5.5 0.5" stroke="#b0b1af" fill="none"/></svg>
<svg style="left:880px;top:337px" width="12" height="11"><rect x="0.7" y="0.7" width="10.6" height="9.6" fill="none" stroke="#d8d9d7" stroke-width="1.2"/><path d="M2.5 8L4.5 5L6 7L7.5 5.5L9.5 8Z" fill="#d8d9d7"/></svg>
<svg style="left:898px;top:337px" width="12" height="12"><circle cx="6" cy="6" r="5.2" fill="#d8d9d7"/><path d="M2.5 9.5L9.5 2.5A5 5 0 0 1 2.5 9.5Z" fill="#535552"/></svg>
<div class="t" style="left:918px;top:337px;font-family:'Liberation Serif',serif;font-weight:bold;font-size:12px;color:#d8d9d7">T</div>
<svg style="left:935px;top:337px" width="12" height="12"><rect x="2" y="2" width="8" height="8" fill="none" stroke="#d8d9d7" stroke-width="1.2"/><rect x="0.5" y="0.5" width="3" height="3" fill="#d8d9d7"/><rect x="8.5" y="0.5" width="3" height="3" fill="#d8d9d7"/><rect x="0.5" y="8.5" width="3" height="3" fill="#d8d9d7"/><rect x="8.5" y="8.5" width="3" height="3" fill="#d8d9d7"/></svg>
<svg style="left:954px;top:336px" width="11" height="13"><path d="M1 4H7L10 7V12H1Z" fill="none" stroke="#d8d9d7" stroke-width="1.2"/><rect x="5" y="1" width="4" height="6" rx="1" fill="none" stroke="#d8d9d7" stroke-width="1.2"/></svg>
<div class="a" style="left:979px;top:341px;width:5px;height:8px;border-radius:2px;background:#3e403d"></div><div class="a" style="left:978px;top:336px;width:7px;height:7px;border-radius:50%;background:#d0d1cf"></div>
<div class="a" style="left:802px;top:357px;width:90px;height:15px;background:#464845"></div>
<div class="t" style="left:808px;top:360px;font-size:9.5px;color:#d8d9d7">正常</div>
<svg style="left:882px;top:362px" width="6" height="4"><path d="M0.5 0.5L3 3L5.5 0.5" stroke="#b0b1af" fill="none"/></svg>
<div class="t" style="left:898px;top:360px;font-size:9.5px;color:#c8c9c7">不透明度:</div>
<div class="a" style="left:943px;top:357px;width:28px;height:15px;background:#464845"></div>
<div class="t" style="left:945px;top:360px;font-size:9.5px;color:#d8d9d7">50%</div>
<div class="a" style="left:973px;top:357px;width:13px;height:15px;background:#4a4c49;border:1px solid #444643"></div>
<svg style="left:976px;top:362px" width="7" height="4"><path d="M0.5 0.5L3.5 3.5L6.5 0.5" stroke="#b0b1af" fill="none"/></svg>
<div class="t" style="left:803px;top:380px;font-size:9.5px;color:#c8c9c7">锁定:</div>
<svg style="left:832px;top:379px" width="10" height="10"><rect x="0.5" y="0.5" width="9" height="9" fill="#d8d9d7"/><rect x="2" y="2" width="2" height="2" fill="#333"/><rect x="6" y="2" width="2" height="2" fill="#333"/><rect x="4" y="4" width="2" height="2" fill="#333"/><rect x="2" y="6" width="2" height="2" fill="#333"/><rect x="6" y="6" width="2" height="2" fill="#333"/></svg>
<svg style="left:848px;top:378px" width="11" height="12"><path d="M10 1L4.5 7" stroke="#d8d9d7" stroke-width="1.6"/><path d="M4.5 6.2Q2.3 6.8 2.2 8.8Q2 10.5 0.5 11Q4 11.5 5 9.5Q5.7 8.3 5.3 7Z" fill="#d8d9d7"/></svg>
<svg style="left:865px;top:378px" width="12" height="12"><path d="M6 0.5V11.5M0.5 6H11.5" stroke="#d8d9d7" stroke-width="1.2"/><path d="M6 0L4.2 2.2H7.8Z M6 12L4.2 9.8H7.8Z M0 6L2.2 4.2V7.8Z M12 6L9.8 4.2V7.8Z" fill="#d8d9d7"/></svg>
<svg style="left:882px;top:378px" width="12" height="12"><path d="M3 0.5V9H11.5M0.5 3H9V11.5" fill="none" stroke="#d8d9d7" stroke-width="1.2"/></svg>
<svg style="left:900px;top:378px" width="10" height="12"><path d="M2.5 5V3.5Q2.5 1 5 1Q7.5 1 7.5 3.5V5" fill="none" stroke="#d8d9d7" stroke-width="1.3"/><rect x="1" y="5" width="8" height="6.5" fill="#d8d9d7"/><rect x="4.3" y="7" width="1.4" height="2.5" fill="#535552"/></svg>
<div class="t" style="left:917px;top:380px;font-size:9.5px;color:#c8c9c7">填充:</div>
<div class="a" style="left:943px;top:378px;width:28px;height:15px;background:#464845"></div>
<div class="t" style="left:945px;top:381px;font-size:9.5px;color:#d8d9d7">100%</div>
<div class="a" style="left:973px;top:378px;width:13px;height:15px;background:#4a4c49;border:1px solid #444643"></div>
<svg style="left:976px;top:383px" width="7" height="4"><path d="M0.5 0.5L3.5 3.5L6.5 0.5" stroke="#b0b1af" fill="none"/></svg>
<div class="a" style="left:799px;top:393px;width:177px;height:140px;background:#535552"></div>
<div class="a" style="left:799px;top:393px;width:177px;height:1px;background:#464845"></div>
<div class="a" style="left:822px;top:393px;width:1px;height:46px;background:#484a47"></div>
<svg style="left:805px;top:412.0px" width="12" height="8"><path d="M0.5 4Q6 -1.5 11.5 4Q6 9.5 0.5 4Z" fill="#e8e9e7"/><circle cx="6" cy="4" r="2.3" fill="#3a3c39"/></svg>
<div class="a" style="left:857px;top:396.0px;width:61px;height:40px;background-color:#ffffff;background-image:linear-gradient(45deg,#cccccc 25%,transparent 25%,transparent 75%,#cccccc 75%),linear-gradient(45deg,#cccccc 25%,transparent 25%,transparent 75%,#cccccc 75%);background-size:6px 6px;background-position:0 0,3px 3px"></div>
<div class="t" style="left:926px;top:411.0px;font-size:9.5px;color:#e0e1df">图层 26...</div>
<div class="a" style="left:799px;top:439px;width:177px;height:1px;background:#464845"></div>
<div class="a" style="left:823px;top:440px;width:153px;height:47px;background:#646663"></div>
<div class="a" style="left:822px;top:439px;width:1px;height:48px;background:#484a47"></div>
<svg style="left:805px;top:459.0px" width="12" height="8"><path d="M0.5 4Q6 -1.5 11.5 4Q6 9.5 0.5 4Z" fill="#e8e9e7"/><circle cx="6" cy="4" r="2.3" fill="#3a3c39"/></svg>
<div class="a" style="left:857px;top:443.0px;width:61px;height:40px;background-color:#ffffff;background-image:linear-gradient(45deg,#cccccc 25%,transparent 25%,transparent 75%,#cccccc 75%),linear-gradient(45deg,#cccccc 25%,transparent 25%,transparent 75%,#cccccc 75%);background-size:6px 6px;background-position:0 0,3px 3px"></div>
<div class="t" style="left:926px;top:458.0px;font-size:9.5px;color:#e0e1df">图层 26...</div>
<div class="a" style="left:799px;top:487px;width:177px;height:1px;background:#464845"></div>
<div class="a" style="left:822px;top:487px;width:1px;height:46px;background:#484a47"></div>
<svg style="left:805px;top:506.0px" width="12" height="8"><path d="M0.5 4Q6 -1.5 11.5 4Q6 9.5 0.5 4Z" fill="#e8e9e7"/><circle cx="6" cy="4" r="2.3" fill="#3a3c39"/></svg>
<div class="a" style="left:857px;top:490.0px;width:61px;height:40px;background-color:#ffffff;background-image:linear-gradient(45deg,#cccccc 25%,transparent 25%,transparent 75%,#cccccc 75%),linear-gradient(45deg,#cccccc 25%,transparent 25%,transparent 75%,#cccccc 75%);background-size:6px 6px;background-position:0 0,3px 3px"></div>
<div class="t" style="left:926px;top:505.0px;font-size:9.5px;color:#e0e1df">图层 26...</div>
<div class="a" style="left:856px;top:441px;width:63px;height:44px;border:1.3px solid #262725"></div>
<svg style="left:854px;top:439px" width="67" height="48"><path d="M1 16V1H22 M44 1H65.5V16 M65.5 31V46.5H44 M22 46.5H1V31" fill="none" stroke="#e4e5e3" stroke-width="1.3"/></svg>
<div class="a" style="left:976px;top:393px;width:14px;height:140px;background:#4f514e"></div>
<svg style="left:979px;top:402px" width="8" height="5"><path d="M0.5 4.5L4 1L7.5 4.5" stroke="#8e8f8d" fill="none"/></svg>
<div class="a" style="left:978px;top:413px;width:10px;height:10px;background:#6a6b69"></div>
<svg style="left:979px;top:524px" width="8" height="5"><path d="M0.5 0.5L4 4L7.5 0.5" stroke="#8e8f8d" fill="none"/></svg>
<div class="a" style="left:799px;top:533px;width:191px;height:1px;background:#464845"></div>
<svg style="left:830px;top:539px" width="12" height="7"><rect x="0.6" y="0.6" width="6" height="5.8" rx="2.9" fill="none" stroke="#8a8b89" stroke-width="1.2"/><rect x="5" y="0.6" width="6" height="5.8" rx="2.9" fill="none" stroke="#8a8b89" stroke-width="1.2"/></svg>
<div class="t" style="left:852px;top:537px;font-family:'Liberation Serif',serif;font-style:italic;font-size:11px;color:#d8d9d7">fx</div>
<svg style="left:871px;top:538px" width="12" height="10"><rect x="0" y="0" width="12" height="10" fill="#d8d9d7"/><circle cx="6" cy="5" r="3" fill="#535552"/></svg>
<svg style="left:893px;top:537px" width="12" height="12"><circle cx="6" cy="6" r="5" fill="none" stroke="#d8d9d7" stroke-width="1.3"/><path d="M2.5 9.5L9.5 2.5A5 5 0 0 1 2.5 9.5Z" fill="#d8d9d7"/></svg>
<svg style="left:913px;top:538px" width="13" height="10"><path d="M0.5 1H5L6 2.5H12.5V9.5H0.5Z" fill="#d8d9d7"/></svg>
<svg style="left:935px;top:537px" width="11" height="12"><path d="M1 1H10V11H1Z" fill="none" stroke="#d8d9d7" stroke-width="1.3"/><rect x="1" y="6" width="4" height="5" fill="#d8d9d7"/></svg>
<svg style="left:957px;top:538px" width="9" height="11"><rect x="0.8" y="2.5" width="7.4" height="8.2" fill="#bdbebc"/><rect x="0" y="1.3" width="9" height="1.3" fill="#bdbebc"/><rect x="3" y="0" width="3" height="1.3" fill="#bdbebc"/><path d="M3 4.5V9.5M4.5 4.5V9.5M6 4.5V9.5" stroke="#8a8b89" stroke-width="0.7"/></svg>
<div class="a" style="left:862px;top:549px;width:0;height:0;border-left:2.5px solid transparent;border-right:2.5px solid transparent;border-top:2.5px solid #d8d9d7"></div>
<div class="a" style="left:904px;top:549px;width:0;height:0;border-left:2.5px solid transparent;border-right:2.5px solid transparent;border-top:2.5px solid #d8d9d7"></div>
<div class="a" style="left:759px;top:457px;width:39px;height:39px;border-radius:50%;background:#b1a52b;box-shadow:0 0 1px #8a8020"></div>
<svg style="left:0;top:0" width="990" height="557" viewBox="0 0 990 557"><g opacity="0.34">
<g fill="none" stroke="#ffffff" stroke-width="2.8" stroke-linecap="round" stroke-linejoin="round">
<path d="M761 28.5Q769 28.5 769 37V56Q769 64.5 779 64.5"/>
<rect x="777" y="27" width="52" height="38" rx="8"/>
<path d="M791 32.5H815M791 38.5H815M803 27.5V38.5"/>
<path d="M777 49.5H783.5M777 55.5H783.5M822 49.5H828.5M822 55.5H828.5"/>
<path d="M852.4 20.5V26M852.4 24H872M836 65V33Q836 29 840 29H869Q873 29 873 33V34"/>
<path d="M845 31V37.6M842 37.6H870.5M845 37.6V45.7H870.5"/>
<path d="M844 51.5Q843 60 839.5 64.5M845 51H864.5V61Q864.5 65 868 65H872.5"/>
<path d="M883.5 23V28.5M877.5 35H880Q883 35 883 38V60Q883 65 889 65"/>
<rect x="894" y="23.5" width="25.5" height="20" rx="3"/><path d="M906.7 23.5V66 M894 33.7H919.5 M892.5 50.5H920 M902.5 53L894 64M914.5 55L918.5 62"/>
<path d="M930 66V28Q930 23 935 23H962.5Q967.5 23 967.5 28V61Q967.5 66 962.5 66H960"/>
<path d="M934 30.8L947.3 57.4M945 30.8L934 57M947.3 30.8L963 57M958 30.8L947 57"/>
</g>
<path d="M798.6 45.1V57L808.8 51Z" fill="#ffffff"/>
<path d="M788.4 20.5L782.5 27H794.3Z M817.4 20.5L811.5 27H823.3Z" fill="#ffffff"/>
</g></svg>
</body></html>
